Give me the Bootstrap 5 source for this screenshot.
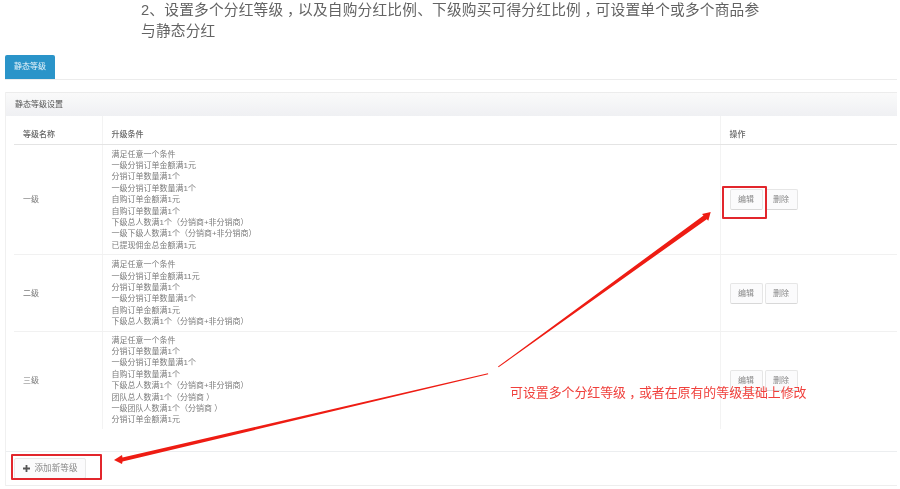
<!DOCTYPE html>
<html lang="zh">
<head>
<meta charset="utf-8">
<title>静态等级</title>
<link href="https://cdn.jsdelivr.net/npm/bootstrap@5.3.0/dist/css/bootstrap.min.css" rel="stylesheet">
<style>
html,body{height:489px;overflow:hidden;background:#fff}
body{font-family:"Liberation Sans","Noto Sans CJK SC",sans-serif;font-size:8px;color:#777;position:relative;text-spacing-trim:space-all;filter:blur(.3px)}
.intro{margin:0 0 0 141px;width:640px;height:55px;font-size:14.7px;letter-spacing:.2px;line-height:20.5px;color:#636363}
.tabline{height:25px;margin:0 3px 0 5px;border-bottom:1px solid #ececec}
.tabpill{display:block;width:50px;height:24px;line-height:24px;text-align:center;background:#2a94c9;color:#e6f3fa;font-size:8px;border-radius:2px 2px 0 0}
.setpanel{margin:12px 3px 0 5px;border-left:1px solid #f0f0f0}
.sethead{height:24px;line-height:24px;padding-left:9px;font-size:8px;color:#555;background:linear-gradient(#fafafa,#eff0f3);border-top:1px solid #ececec}
.settable{width:883px;margin:0 0 0 8px;table-layout:fixed;border-collapse:collapse}
.settable th{height:28px;font-weight:500;font-size:8px;color:#666;padding:11px 0 0 9px;border-bottom:1px solid #e4e4e4;border-left:1px solid #f3f3f3;vertical-align:middle}
.settable td{padding:4px 0 3px 9px;font-size:8px;line-height:11.4px;color:#7c7c7c;border-bottom:1px solid #f1f1f1;border-left:1px solid #f3f3f3;vertical-align:middle}
.settable tr>*:first-child{border-left:0}
.settable tr:last-child td{border-bottom:0;padding-top:3px}
.optbtn{display:inline-block;width:33px;height:21px;line-height:20px;padding:0;font-size:8px;text-align:center;color:#888;background:#fbfbfc;border:1px solid #e6e6e6;border-bottom-color:#d8d8d8;border-radius:2px;margin-right:2px}
.setfoot{margin-top:22px;height:35px;border-top:1px solid #eceef0;border-bottom:1px solid #eeeeee;padding:6px 0 0 8px}
.addbtn{display:inline-flex;align-items:center;justify-content:center;gap:5px;width:72px;height:21px;padding:0;font-size:8.6px;color:#888;background:#fbfbfc;border:1px solid #e8e8e8;border-radius:2px}
.redbox{position:absolute;border:2px solid #e2262c;border-radius:1px}
.box-edit{left:722px;top:186px;width:45px;height:33px}
.box-add{left:11px;top:454px;width:91px;height:26px}
.arrows{position:absolute;left:0;top:0;width:900px;height:489px}
.redtext{position:absolute;left:510px;top:384px;font-size:12.9px;line-height:18px;color:#f0403c;white-space:nowrap;margin:0}
.cmma{display:inline-block;width:1em;text-align:center;font-feature-settings:"halt"}
</style>
</head>
<body>
<p class="intro">2、设置多个分红等级<span class="cmma">，</span>以及自购分红比例、下级购买可得分红比例<span class="cmma">，</span>可设置单个或多个商品参<br>与静态分红</p>
<div class="tabline"><a class="tabpill text-decoration-none">静态等级</a></div>
<div class="setpanel">
  <div class="sethead">静态等级设置</div>
  <table class="settable">
    <colgroup><col style="width:88px"><col style="width:618px"><col></colgroup>
    <thead><tr><th>等级名称</th><th>升级条件</th><th>操作</th></tr></thead>
    <tbody>
      <tr>
        <td>一级</td>
        <td>满足任意一个条件<br>一级分销订单金额满1元<br>分销订单数量满1个<br>一级分销订单数量满1个<br>自购订单金额满1元<br>自购订单数量满1个<br>下级总人数满1个（分销商+非分销商）<br>一级下级人数满1个（分销商+非分销商）<br>已提现佣金总金额满1元</td>
        <td><button class="optbtn">编辑</button><button class="optbtn">删除</button></td>
      </tr>
      <tr>
        <td>二级</td>
        <td>满足任意一个条件<br>一级分销订单金额满11元<br>分销订单数量满1个<br>一级分销订单数量满1个<br>自购订单金额满1元<br>下级总人数满1个（分销商+非分销商）</td>
        <td><button class="optbtn">编辑</button><button class="optbtn">删除</button></td>
      </tr>
      <tr>
        <td>三级</td>
        <td>满足任意一个条件<br>分销订单数量满1个<br>一级分销订单数量满1个<br>自购订单数量满1个<br>下级总人数满1个（分销商+非分销商）<br>团队总人数满1个（分销商 ）<br>一级团队人数满1个（分销商 ）<br>分销订单金额满1元</td>
        <td><button class="optbtn">编辑</button><button class="optbtn">删除</button></td>
      </tr>
    </tbody>
  </table>
  <div class="setfoot">
    <button class="addbtn"><svg width="7" height="7" viewBox="0 0 7 7" aria-hidden="true"><path d="M2.600 0h1.800v2.600H7v1.800H4.400V7H2.600V4.400H0V2.600h2.600z" fill="#555"/></svg>添加新等级</button>
  </div>
</div>
<div class="redbox box-edit"></div>
<div class="redbox box-add"></div>
<svg class="arrows" viewBox="0 0 900 489" aria-hidden="true">
  <path d="M498 366.500 L703.500 215.500 L702 214 L710.700 212 L708.300 220.700 L706.800 219.200 L498.600 367.200Z" fill="#ee1c13"/>
  <path d="M488 373.200 L122.500 457.500 L122 455 L114 460 L122 464 L122.600 461.500 L488.200 374.200Z" fill="#ee1c13"/>
</svg>
<p class="redtext">可设置多个分红等级<span class="cmma">，</span>或者在原有的等级基础上修改</p>
</body>
</html>
